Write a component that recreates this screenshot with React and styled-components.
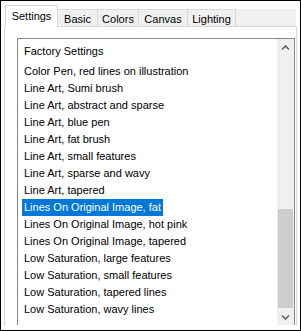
import React from "react";
import styled, { createGlobalStyle } from "styled-components";

const tabs = [
  { label: "Settings", width: 53 },
  { label: "Basic", width: 41 },
  { label: "Colors", width: 42 },
  { label: "Canvas", width: 50 },
  { label: "Lighting", width: 49 }
];

const presets = [
  "Factory Settings",
  "Color Pen, red lines on illustration",
  "Line Art, Sumi brush",
  "Line Art, abstract and sparse",
  "Line Art, blue pen",
  "Line Art, fat brush",
  "Line Art, small features",
  "Line Art, sparse and wavy",
  "Line Art, tapered",
  "Lines On Original Image, fat",
  "Lines On Original Image, hot pink",
  "Lines On Original Image, tapered",
  "Low Saturation, large features",
  "Low Saturation, small features",
  "Low Saturation, tapered lines",
  "Low Saturation, wavy lines"
];

const Chevron = ({ down }) => (
  <svg width="9" height="6" viewBox="0 0 9 6">
    <path
      d={down ? "M1 1.5 L4.5 5 L8 1.5" : "M1 4.5 L4.5 1 L8 4.5"}
      fill="none"
      stroke="#606060"
      strokeWidth="1.6"
    />
  </svg>
);

export default function App() {
  const selected = 9;
  return (
    <>
      <GlobalStyle />
      <Window>
        <TabStrip>
          {tabs.map((t, i) => (
            <Tab key={t.label} $w={t.width} $active={i === 0}>
              {t.label}
            </Tab>
          ))}
          <TabFiller />
        </TabStrip>
        <Panel>
          <ListBox>
            <Items>
              {presets.map((p, i) => (
                <Item key={p} $selected={i === selected} $gap={i === 0}>
                  {p}
                </Item>
              ))}
            </Items>
            <ScrollBar>
              <ArrowButton>
                <Chevron />
              </ArrowButton>
              <Track>
                <Thumb />
              </Track>
              <ArrowButton>
                <Chevron down />
              </ArrowButton>
            </ScrollBar>
          </ListBox>
        </Panel>
      </Window>
    </>
  );
}

const GlobalStyle = createGlobalStyle`
  body {
    margin: 0;
    background: #ffffff;
    font-family: "Liberation Sans", Arial, sans-serif;
  }
`;

const Window = styled.div`
  width: 301px;
  height: 331px;
  box-sizing: border-box;
  border: 1px solid #000000;
  background: #ffffff;
  display: flex;
  flex-direction: column;
  overflow: hidden;
`;

const TabStrip = styled.div`
  display: flex;
  align-items: flex-end;
  padding: 4px 4px 0 4px;
  height: 25px;
  box-sizing: border-box;
`;

const Tab = styled.div`
  position: relative;
  box-sizing: border-box;
  width: ${({ $w }) => $w}px;
  height: ${({ $active }) => ($active ? "22px" : "17px")};
  margin-left: ${({ $active }) => ($active ? "0" : "-1px")};
  margin-bottom: ${({ $active }) => ($active ? "-1px" : "0")};
  padding-top: ${({ $active }) => ($active ? "3px" : "2px")};
  z-index: ${({ $active }) => ($active ? 1 : 0)};
  border: 1px solid #d9d9d9;
  border-bottom: none;
  background: ${({ $active }) => ($active ? "#ffffff" : "#f0f0f0")};
  color: #000000;
  font-size: 11px;
  line-height: 14px;
  text-align: center;
  white-space: nowrap;
`;

const TabFiller = styled.div`
  flex: 1;
  height: 17px;
  background: #f0f0f0;
`;

const Panel = styled.div`
  flex: 1;
  margin: 0 3px 4px 3px;
  border: 1px solid #d9d9d9;
  border-bottom: none;
  padding: 11px 1px 0 12px;
  overflow: hidden;
`;

const ListBox = styled.div`
  display: flex;
  height: 287px;
  box-sizing: border-box;
  border: 1px solid #828790;
  border-bottom: none;
  background: #ffffff;
`;

const Items = styled.div`
  flex: 1;
  display: flex;
  flex-direction: column;
  align-items: flex-start;
  padding: 4px 0 0 4px;
  overflow: hidden;
`;

const Item = styled.div`
  height: 17px;
  line-height: 17px;
  padding: 0 2px;
  margin-bottom: ${({ $gap }) => ($gap ? "3px" : "0")};
  font-size: 11px;
  white-space: nowrap;
  color: ${({ $selected }) => ($selected ? "#ffffff" : "#000000")};
  background: ${({ $selected }) => ($selected ? "#0078d7" : "transparent")};
`;

const ScrollBar = styled.div`
  width: 17px;
  display: flex;
  flex-direction: column;
  background: #f0f0f0;
`;

const ArrowButton = styled.div`
  height: 17px;
  display: flex;
  align-items: center;
  justify-content: center;
`;

const Track = styled.div`
  flex: 1;
  display: flex;
  flex-direction: column;
  justify-content: flex-end;
`;

const Thumb = styled.div`
  height: 99px;
  margin: 0 1px;
  background: #cdcdcd;
`;
